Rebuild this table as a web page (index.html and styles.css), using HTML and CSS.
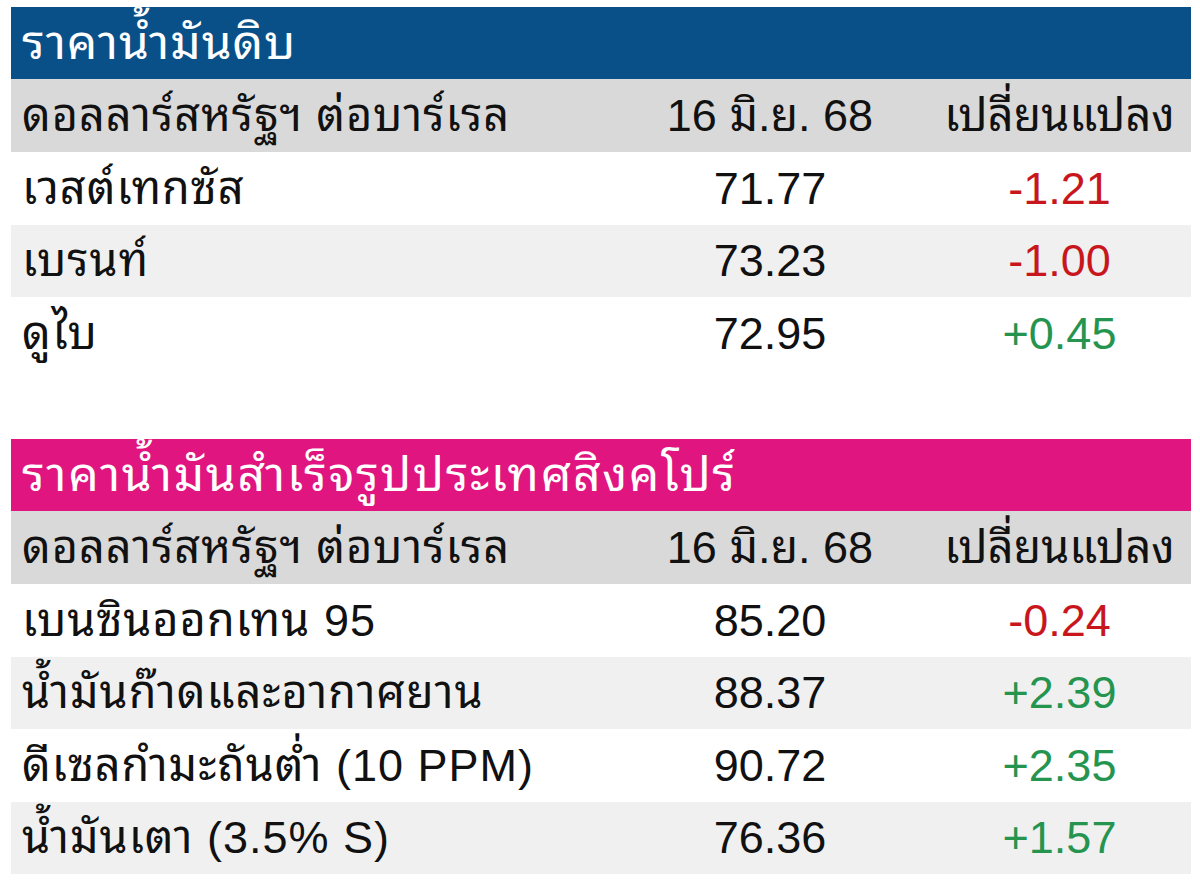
FILE: index.html
```html
<!DOCTYPE html>
<html lang="th">
<head>
<meta charset="utf-8">
<link rel="stylesheet" href="styles.css">
</head>
<body>
<div class="page">
  <section class="tbl">
    <div class="title blue">ราคาน้ำมันดิบ</div>
    <div class="row head">
      <div class="c1">ดอลลาร์สหรัฐฯ ต่อบาร์เรล</div>
      <div class="c2">16 มิ.ย. 68</div>
      <div class="c3">เปลี่ยนแปลง</div>
    </div>
    <div class="row">
      <div class="c1">เวสต์เทกซัส</div>
      <div class="c2 num">71.77</div>
      <div class="c3 num down">-1.21</div>
    </div>
    <div class="row alt">
      <div class="c1">เบรนท์</div>
      <div class="c2 num">73.23</div>
      <div class="c3 num down">-1.00</div>
    </div>
    <div class="row">
      <div class="c1">ดูไบ</div>
      <div class="c2 num">72.95</div>
      <div class="c3 num up">+0.45</div>
    </div>
  </section>

  <section class="tbl second">
    <div class="title pink">ราคาน้ำมันสำเร็จรูปประเทศสิงคโปร์</div>
    <div class="row head">
      <div class="c1">ดอลลาร์สหรัฐฯ ต่อบาร์เรล</div>
      <div class="c2">16 มิ.ย. 68</div>
      <div class="c3">เปลี่ยนแปลง</div>
    </div>
    <div class="row">
      <div class="c1">เบนซินออกเทน 95</div>
      <div class="c2 num">85.20</div>
      <div class="c3 num down">-0.24</div>
    </div>
    <div class="row alt">
      <div class="c1">น้ำมันก๊าดและอากาศยาน</div>
      <div class="c2 num">88.37</div>
      <div class="c3 num up">+2.39</div>
    </div>
    <div class="row">
      <div class="c1">ดีเซลกำมะถันต่ำ (10 PPM)</div>
      <div class="c2 num">90.72</div>
      <div class="c3 num up">+2.35</div>
    </div>
    <div class="row alt">
      <div class="c1">น้ำมันเตา (3.5% S)</div>
      <div class="c2 num">76.36</div>
      <div class="c3 num up">+1.57</div>
    </div>
  </section>
</div>
</body>
</html>
```

FILE: styles.css
```css
html, body {
  margin: 0;
  padding: 0;
  background: #ffffff;
}

body {
  font-family: "Liberation Sans", "Tahoma", "Noto Sans Thai Looped", "Noto Sans Thai UI Looped", "Loma", "Garuda", "Norasi", "Noto Sans Thai", "DejaVu Sans", sans-serif;
  font-size: 45px;
  color: #111111;
}

.page {
  padding: 7px 9px 0 11px;
  display: flex;
  flex-direction: column;
  gap: 69.5px;
}

.tbl {
  display: flex;
  flex-direction: column;
  width: 1180px;
}

.title {
  height: 72px;
  display: flex;
  align-items: center;
  padding-left: 11px;
  color: #ffffff;
  line-height: 1;
  font-size: 48px;
  letter-spacing: 1.7px;
}

.blue {
  background: #0a5088;
  letter-spacing: 1px;
}

.pink {
  background: #e0157f;
}

.row {
  display: grid;
  grid-template-columns: 601px 316px 1fr;
  height: 72.5px;
  align-items: center;
  line-height: 1;
  background: #ffffff;
}

.row.head {
  height: 73px;
  background: #d9d9d9;
}

.row.alt {
  background: #f0f0f0;
}

.c1 {
  padding-left: 11px;
  white-space: nowrap;
  letter-spacing: 1px;
}

.c2,
.c3 {
  text-align: center;
  white-space: nowrap;
}

.down {
  color: #c8161d;
}

.up {
  color: #25944f;
}
```
